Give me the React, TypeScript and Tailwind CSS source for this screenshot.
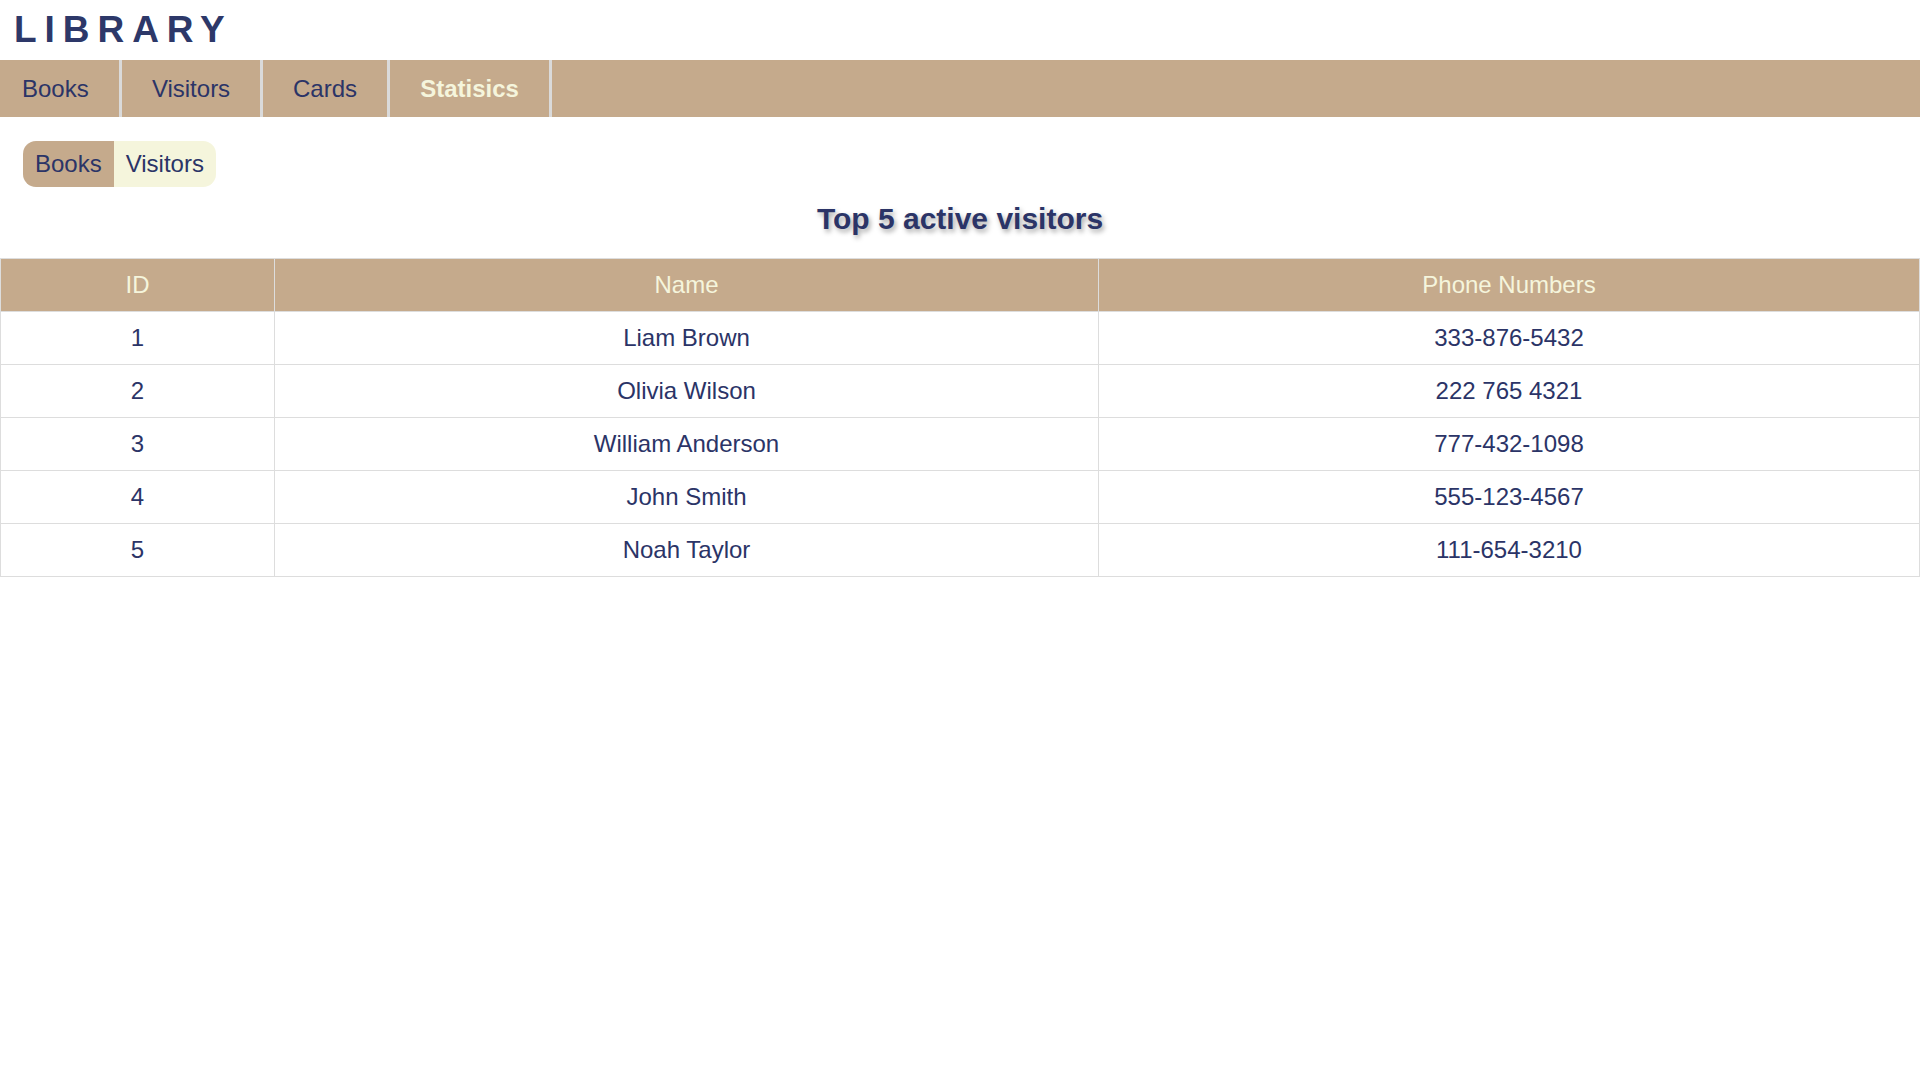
import React, { useState } from "react";

// верхнее меню библиотеки
const menu = [
  { label: "Books", cls: "w-[122px] justify-start pl-[22px]" },
  { label: "Visitors", cls: "w-[141px] justify-center" },
  { label: "Cards", cls: "w-[127px] justify-center" },
  { label: "Statisics", cls: "w-[162px] justify-center" },
];

const visitors = [
  { id: 1, name: "Liam Brown", phone: "333-876-5432" },
  { id: 2, name: "Olivia Wilson", phone: "222 765 4321" },
  { id: 3, name: "William Anderson", phone: "777-432-1098" },
  { id: 4, name: "John Smith", phone: "555-123-4567" },
  { id: 5, name: "Noah Taylor", phone: "111-654-3210" },
];

function App() {
  const [active] = useState("Statisics");
  const [stat, setStat] = useState("Visitors");

  return (
    <div className="min-h-screen bg-white font-['Liberation_Sans',Arial,sans-serif] text-[#2b3467]">
      {/* заголовок */}
      <header className="h-[60px] pt-[9px] pl-[14px]">
        <h1 className="text-[37px] font-bold leading-[42px] tracking-[0.215em] text-[#2d3869]">
          LIBRARY
        </h1>
      </header>

      {/* навигация */}
      <nav className="flex h-[57px] bg-[#c5aa8c]">
        {menu.map((item) => (
          <a
            key={item.label}
            href="#"
            className={
              "flex items-center border-r-[3px] border-[#dadada] text-[24px] leading-[28px] " +
              item.cls +
              " " +
              (item.label === active ? "font-bold text-[#f5f5dc]" : "text-[#2b3467]")
            }
          >
            {item.label}
          </a>
        ))}
      </nav>

      {/* переключатель статистики */}
      <div className="pt-[24px] pl-[23px]">
        <div className="inline-flex h-[46px] overflow-hidden rounded-[13px]">
          {["Books", "Visitors"].map((s) => (
            <button
              key={s}
              onClick={() => setStat(s)}
              className={
                "px-3 text-[24px] leading-[28px] text-[#2b3467] " +
                (s === "Books" ? "bg-[#c5aa8c]" : "bg-[#f5f5dc]")
              }
            >
              {s}
            </button>
          ))}
        </div>
      </div>

      <h2 className="mt-[14px] text-center text-3xl font-bold leading-[36px] [text-shadow:2px_3px_5px_rgba(0,0,0,0.35)]">
        Top 5 active {stat === "Visitors" ? "visitors" : "books"}
      </h2>

      <table className="mt-[21px] w-full border-collapse text-[24px] leading-[28px]">
        <colgroup>
          <col className="w-[274px]" />
          <col className="w-[824px]" />
          <col />
        </colgroup>
        <thead>
          <tr className="bg-[#c5aa8c] text-[#f5f5dc]">
            <th className="border border-[#dddddd] py-3 font-normal">ID</th>
            <th className="border border-[#dddddd] py-3 font-normal">Name</th>
            <th className="border border-[#dddddd] py-3 font-normal">Phone Numbers</th>
          </tr>
        </thead>
        <tbody>
          {visitors.map((v) => (
            <tr key={v.id}>
              <td className="border border-[#dddddd] py-3 text-center">{v.id}</td>
              <td className="border border-[#dddddd] py-3 text-center">{v.name}</td>
              <td className="border border-[#dddddd] py-3 text-center">{v.phone}</td>
            </tr>
          ))}
        </tbody>
      </table>
    </div>
  );
}

export default App;
